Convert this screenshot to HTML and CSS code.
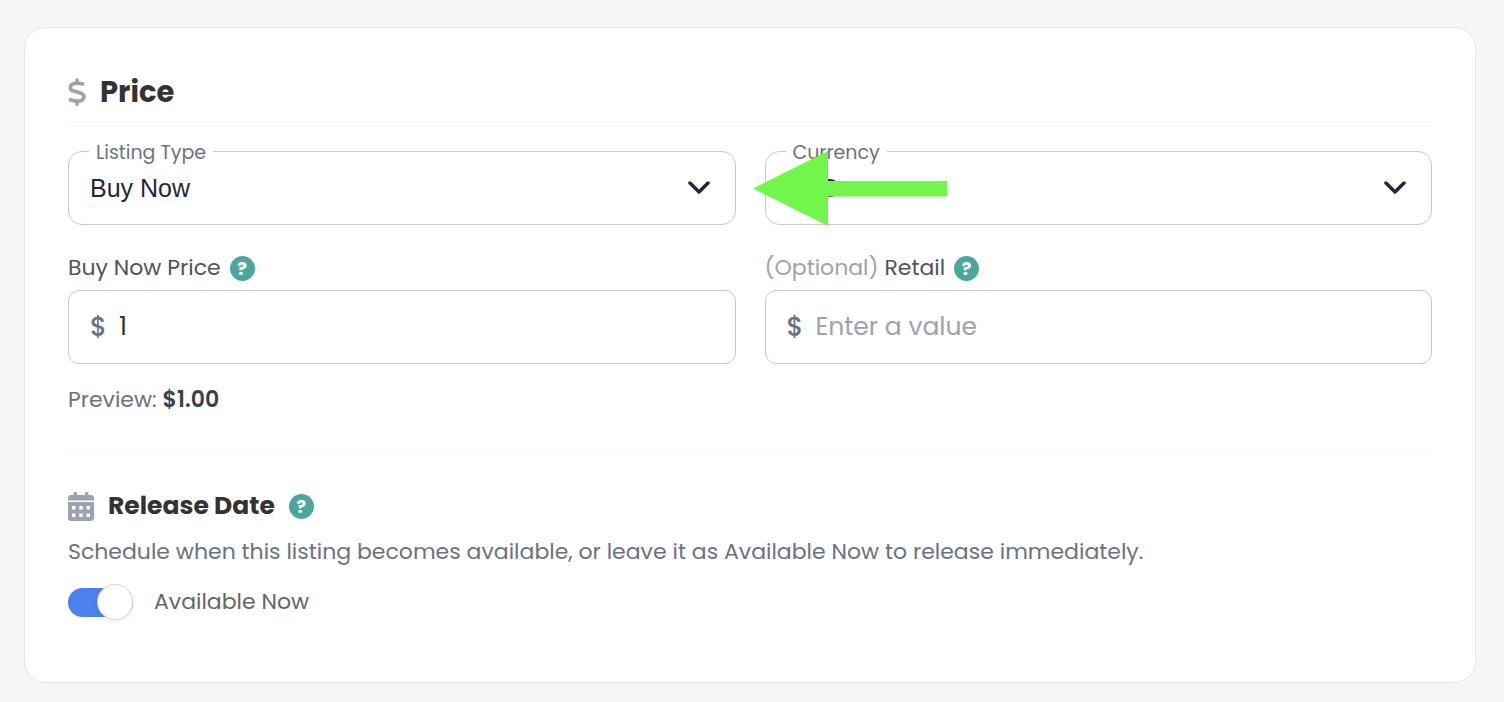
FILE: index.html
```html
<!DOCTYPE html>
<html lang="en">
<head>
  <meta charset="utf-8">
  <meta name="viewport" content="width=device-width, initial-scale=1">
  <title>Listing Price</title>
  <link rel="stylesheet" href="styles.css">
</head>
<body>
  <form class="card">
    <section class="section">
      <h2 class="section-title price-title">
        <svg class="dollar-icon" viewBox="0 0 18 28" fill="none" stroke="currentColor" stroke-width="3.6" stroke-linecap="round" stroke-linejoin="round" aria-hidden="true">
          <path d="M9 2V5M9 23.500V26.300"/>
          <path d="M14.700 6.100C11.500 5.200 8 4.900 5.500 5.800C1.800 7.100 1.100 11 4.600 12.700C7.600 14.100 12.400 13.900 14.800 16.200C17 18.600 15.800 21.900 12.700 22.800C9.600 23.600 5.700 22.900 2.400 21.700"/>
        </svg>
        Price
      </h2>

      <div class="grid">
        <fieldset class="select-box">
          <legend><label for="listing-type">Listing Type</label></legend>
          <select id="listing-type">
            <option>Buy Now</option>
          </select>
          <svg class="chevron" viewBox="0 0 22 14" aria-hidden="true"><path d="M2 2L11 11L20 2"/></svg>
        </fieldset>

        <fieldset class="select-box">
          <legend><label for="currency">Currency</label></legend>
          <select id="currency">
            <option>USD</option>
          </select>
          <svg class="chevron" viewBox="0 0 22 14" aria-hidden="true"><path d="M2 2L11 11L20 2"/></svg>
          <svg class="arrow" viewBox="0 0 194 75" aria-hidden="true"><path d="M0 37.500L75 0V30H194V45.500H75V75Z"/></svg>
        </fieldset>

        <div class="field">
          <div class="field-label">
            <label for="price">Buy Now Price</label>
            <button type="button" class="help" aria-label="Price help">?</button>
          </div>
          <div class="input-box">
            <span class="prefix">$</span>
            <input type="text" id="price" value="1">
          </div>
          <p class="preview">Preview: <strong>$1.00</strong></p>
        </div>

        <div class="field">
          <div class="field-label">
            <label for="retail"><span class="optional">(Optional)</span> Retail</label>
            <button type="button" class="help" aria-label="Retail help">?</button>
          </div>
          <div class="input-box">
            <span class="prefix">$</span>
            <input type="text" id="retail" placeholder="Enter a value">
          </div>
        </div>
      </div>
    </section>

    <section class="section release">
      <h3 class="section-title release-title">
        <svg class="calendar-icon" viewBox="0 0 26 29" fill="currentColor" aria-hidden="true">
          <path d="M5.500 3V1.500A1.500 1.500 0 0 1 9 1.500V3H17V1.500A1.500 1.500 0 0 1 20.500 1.500V3H23A3 3 0 0 1 26 6V8.500H0V6A3 3 0 0 1 3 3Z"/>
          <path fill-rule="evenodd" d="M0 10H26V26A3 3 0 0 1 23 29H3A3 3 0 0 1 0 26ZM4 14V17.500H7.500V14ZM11.250 14V17.500H14.750V14ZM18.500 14V17.500H22V14ZM4 21.500V25H7.500V21.500ZM11.250 21.500V25H14.750V21.500ZM18.500 21.500V25H22V21.500Z"/>
        </svg>
        Release Date
        <button type="button" class="help" aria-label="Release date help">?</button>
      </h3>
      <p class="description">Schedule when this listing becomes available, or leave it as Available Now to release immediately.</p>
      <div class="toggle-row">
        <input type="checkbox" class="toggle" id="available" checked>
        <label for="available">Available Now</label>
      </div>
    </section>
  </form>
</body>
</html>
```
FILE: styles.css
```css
* {
  box-sizing: border-box;
}
body {
  margin: 0;
  padding: 27px 28px 19px 24px;
  background: #f6f6f9;
  font-family: Poppins, Inter, sans-serif;
  font-size: 22px;
  line-height: 32px;
  color: #6b7280;
}
h2, h3, p {
  margin: 0;
}
.card {
  padding: 44px 43px 64px;
  background: #fff;
  border: 1px solid #e5e7eb;
  border-radius: 22px;
}
.section-title {
  display: flex;
  align-items: center;
  color: #333;
  font-weight: 700;
}
.price-title {
  gap: 14px;
  padding-bottom: 10px;
  margin-bottom: 16px;
  border-bottom: 1px solid #f3f4f6;
  font-size: 29px;
  line-height: 40px;
}
.dollar-icon {
  width: 18px;
  height: 28px;
  color: #9ca3af;
}
.grid {
  display: grid;
  grid-template-columns: 1fr 1fr;
  column-gap: 29px;
  row-gap: 27px;
}

/* outlined select with its label in the border */
.select-box {
  position: relative;
  display: flex;
  align-items: center;
  min-width: 0;
  height: 86px;
  margin: 0;
  padding: 0;
  border: 1px solid #c8c8c8;
  border-radius: 14px;
}
.select-box legend {
  margin-left: 20px;
  padding: 4px 7px 0;
  font-size: 19px;
  line-height: 20px;
}
.select-box select {
  width: 100%;
  height: 60px;
  padding: 0 60px 12px 21px;
  appearance: none;
  background: transparent;
  border: 0;
  color: #27253a;
  font-family: "Liberation Sans", Arial, sans-serif;
  font-size: 25px;
}
.chevron {
  position: absolute;
  bottom: 29px;
  right: 25px;
  width: 22px;
  height: 14px;
  fill: none;
  stroke: #27253a;
  stroke-width: 3.5;
  stroke-linecap: round;
  stroke-linejoin: round;
  pointer-events: none;
}
.arrow {
  position: absolute;
  bottom: -2px;
  left: -13px;
  width: 194px;
  height: 75px;
  fill: #72f64c;
  pointer-events: none;
}

.field-label {
  display: flex;
  align-items: center;
  gap: 9px;
  margin-bottom: 6px;
  color: #4b5563;
}
.optional {
  color: #9ca3af;
}
.help {
  width: 25px;
  height: 25px;
  padding: 0;
  background: #4ba79b;
  border: 0;
  border-radius: 50%;
  color: #fff;
  font-family: inherit;
  font-size: 18px;
  font-weight: 700;
  line-height: 25px;
}
.input-box {
  display: flex;
  align-items: center;
  gap: 12px;
  height: 74px;
  padding: 0 21px;
  border: 1px solid #c8c8c8;
  border-radius: 11px;
  font-size: 25px;
}
.prefix {
  font-size: 26px;
  font-weight: 500;
}
.input-box input {
  flex: 1;
  min-width: 0;
  padding: 0;
  border: 0;
  outline: 0;
  background: transparent;
  color: #333;
  font: inherit;
}
.input-box input::placeholder {
  color: #9ca3af;
  opacity: 1;
}
.preview {
  margin-top: 20px;
}
.preview strong {
  color: #374151;
  font-weight: 600;
}

.release {
  margin-top: 35px;
  padding-top: 36px;
  border-top: 1px solid #f3f4f6;
}
.release-title {
  gap: 14px;
  font-size: 25px;
  line-height: 36px;
}
.calendar-icon {
  width: 26px;
  height: 29px;
  color: #9ca3af;
}
.description {
  margin-top: 12px;
}
.toggle-row {
  display: flex;
  align-items: center;
  gap: 21px;
  margin-top: 18px;
  color: #666;
}
.toggle {
  display: flex;
  align-items: center;
  justify-content: flex-end;
  width: 65px;
  height: 29px;
  margin: 0;
  appearance: none;
  background: #4d80ee;
  border-radius: 15px;
}
.toggle::before {
  content: "";
  box-sizing: border-box;
  width: 36px;
  height: 36px;
  flex: none;
  background: #fff;
  border: 1px solid #d5d7e0;
  border-radius: 50%;
  box-shadow: 0 2px 4px rgba(0, 0, 0, 0.08);
}
.toggle:not(:checked) {
  justify-content: flex-start;
  background: #d1d5db;
}
```
